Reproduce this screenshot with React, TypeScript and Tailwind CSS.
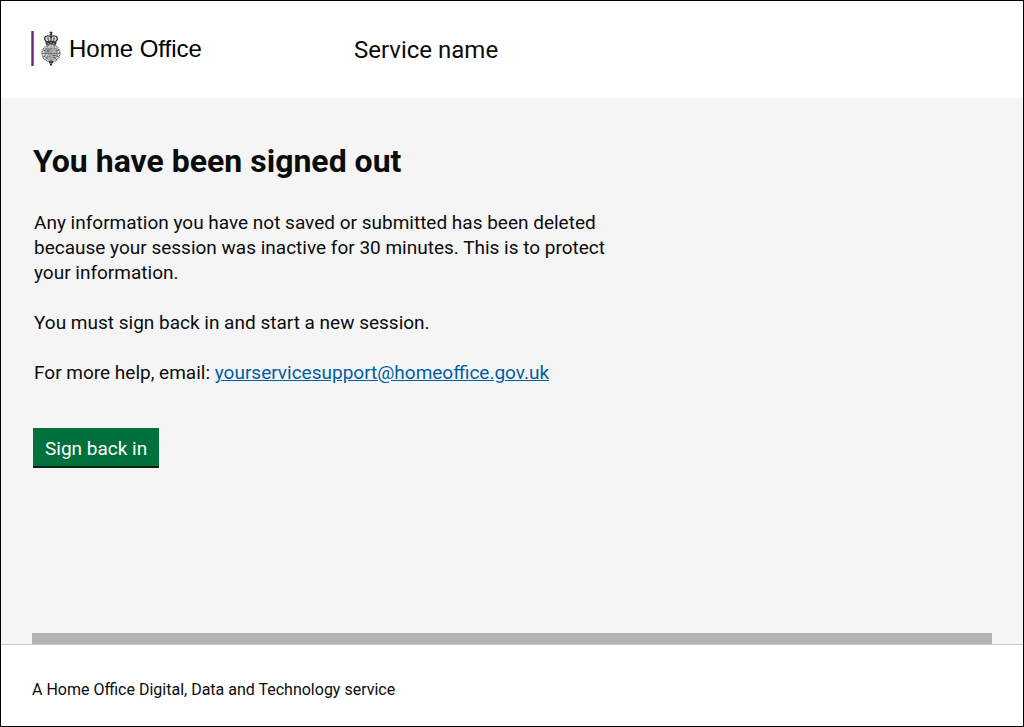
function Crest() {
  return (
    <svg viewBox="0 0 20 36" preserveAspectRatio="none" className="h-[35px] w-5 shrink-0" aria-hidden="true" fill="none" stroke="#262626">
      {/* Crown */}
      <path d="M10 0.3v3M8.6 1.7h2.8" strokeWidth="1" />
      <circle cx="10" cy="3.6" r="1.3" fill="#262626" stroke="none" />
      <path d="M5.2 11C2.7 8.6 3.1 5.5 6.2 5C8.2 4.6 9.4 5.6 10 6.6C10.6 5.6 11.8 4.6 13.8 5C16.9 5.5 17.3 8.6 14.8 11" fill="#cfcfcf" strokeWidth="1.2" />
      <path d="M10 5v6M7.2 6.6c-.5 1.6.2 3 .8 4.2M12.8 6.6c.5 1.6-.2 3-.8 4.2" strokeWidth="0.9" />
      <path d="M4.8 11.1Q10 9.6 15.2 11.1L14.7 14.2Q10 12.8 5.3 14.2Z" fill="#333" strokeWidth="0.6" />
      <path d="M6.5 12.7h1.4M9.3 12.2h1.4M12.1 12.7h1.4" stroke="#ddd" strokeWidth="0.8" />
      {/* Garter and shield */}
      <ellipse cx="10" cy="23" rx="8.9" ry="8.8" fill="#efefef" stroke="#6a6a6a" strokeWidth="1.4" strokeDasharray="1.2 .6" />
      <ellipse cx="10" cy="23" rx="7" ry="7.1" fill="#e2e2e2" stroke="#808080" strokeWidth="0.6" />
      <path d="M4.4 18.2h11.2v6.4c0 2.7-2.4 4.5-5.6 5.6c-3.2-1.1-5.6-2.9-5.6-5.6z" fill="#dadada" stroke="#505050" strokeWidth="0.6" />
      <path d="M10 16.5v13M4.2 23.2h11.6" stroke="#505050" strokeWidth="0.8" />
      <path d="M5.4 19.6h3.6M5.4 21.5h3.4M11.4 25h3.4M11.4 27h2.6" stroke="#303030" strokeWidth="1" />
      <path d="M11.7 19.3h2.6v2.5h-2.6zM6.7 28v-3.2c.2-.8 1.5-.8 1.7 0V28M6 26.5h2.8" stroke="#606060" strokeWidth="0.6" />
      <path d="M2 19.5l2 1M1.4 23h2.1M2.2 26.7l1.9-1M4.4 29.8l1.2-1.5M18 19.5l-2 1M18.6 23h-2.1M17.8 26.7l-1.9-1M15.6 29.8l-1.2-1.5M6.2 15.2l.9 1.5M13.8 15.2l-.9 1.5" stroke="#404040" strokeWidth="0.8" />
      {/* Garter buckle */}
      <path d="M8.5 31.2h3v1.5h-3zM10 32.7v2.7M8.9 33.6l1.1 1.8 1.1-1.8" strokeWidth="1" />
    </svg>
  );
}

export default function App() {
  return (
    <div className="flex min-h-screen flex-col border border-black bg-[#f5f5f5] font-['Roboto',sans-serif] text-[#0b0c0c]">
      <header className="flex items-start bg-white px-[30px] pt-[30px] pb-[29px]">
        <a href="#home" className="flex w-[323px] items-start">
          <span className="mr-[7px] h-[35px] w-[3px] border-x border-x-[#a45cb1] bg-[#732282]" />
          <Crest />
          <span className="ml-2 font-['Liberation_Sans',Arial,sans-serif] text-2xl leading-9 text-black">
            Home Office
          </span>
        </a>
        <span className="text-2xl leading-[38px]">Service name</span>
      </header>

      <main className="flex flex-1 flex-col px-8 pt-11">
        <h1 className="text-[32px] leading-[38px] font-bold">You have been signed out</h1>
        <div className="mt-[30px] flex max-w-[600px] flex-col gap-[25px] pl-px text-[19px] leading-[25px]">
          <p>
            Any information you have not saved or submitted has been deleted because your session
            was inactive for 30 minutes. This is to protect your information.
          </p>
          <p>You must sign back in and start a new session.</p>
          <p>
            For more help, email:{' '}
            <a
              href="mailto:yourservicesupport@homeoffice.gov.uk"
              className="text-[#005ea5] underline"
            >
              yourservicesupport@homeoffice.gov.uk
            </a>
          </p>
        </div>
        <button
          type="button"
          className="mt-[43px] h-10 self-start border-b-2 border-[#002413] bg-[#00703c] px-3 pt-0.5 text-[19px] leading-[25px] text-white"
        >
          Sign back in
        </button>
      </main>

      <div className="mx-[31px] h-[11px] bg-[#b1b4b6]" />
      <footer className="border-t border-[#c8c8c8] bg-white px-[31px] pt-[33px] pb-6 text-base">
        <p>A Home Office Digital, Data and Technology service</p>
      </footer>
    </div>
  );
}
